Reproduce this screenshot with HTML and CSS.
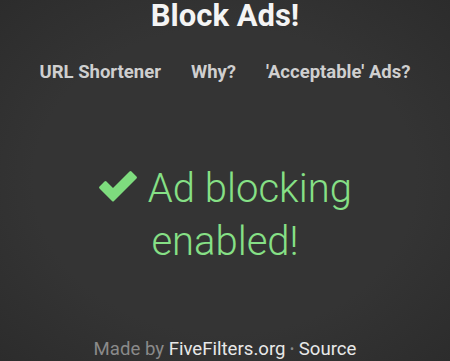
FILE: index.html
```html
<!DOCTYPE html>
<html>
<head>
<meta charset="utf-8">
<link rel="stylesheet" href="styles.css">
</head>
<body>
<div class="page">
  <h1 class="title">Block Ads!</h1>
  <nav class="nav">
    <a class="nav-link">URL Shortener</a>
    <a class="nav-link">Why?</a>
    <a class="nav-link">'Acceptable' Ads?</a>
  </nav>
  <main class="status">
    <p class="status-text"><svg class="check" viewBox="0 0 40 33" width="40" height="33"><path d="M1.5 19.5 Q0.5 18.5 1.5 17.5 L6.5 12.5 Q7.5 11.5 8.5 12.5 L15 19 L31.5 2.5 Q32.5 1.5 33.5 2.5 L38.5 7.5 Q39.5 8.5 38.5 9.5 L16 32 Q15 33 14 32 Z" fill="#7edc7e"/></svg> Ad blocking enabled!</p>
  </main>
  <footer class="footer">
    <span class="muted">Made by</span> <a class="foot-link">FiveFilters.org</a> <span class="dot">•</span> <a class="foot-link">Source</a>
  </footer>
</div>
</body>
</html>
```
FILE: styles.css
```css
html, body {
  margin: 0;
  padding: 0;
  height: 100%;
}
body {
  background: #333333;
  font-family: Roboto, "Liberation Sans", sans-serif;
  overflow: hidden;
}
.page {
  height: 361px;
  display: flex;
  flex-direction: column;
  align-items: center;
  background: radial-gradient(ellipse at center, #343434 60%, #2c2c2c 100%);
}
.title {
  margin: 0;
  font-size: 31px;
  font-weight: 700;
  color: #f4f4f4;
  line-height: 32px;
}
.nav {
  display: flex;
  gap: 30px;
  margin-top: 29px;
}
.nav-link {
  font-size: 18.5px;
  font-weight: 700;
  color: #cfcfcf;
  line-height: 22px;
}
.status {
  margin-top: 79px;
  width: 300px;
  text-align: center;
}
.status-text {
  margin: 0;
  font-size: 40px;
  font-weight: 300;
  color: #86e086;
  line-height: 53px;
}
.check {
  vertical-align: 0px;
}
.footer {
  margin-top: auto;
  padding-bottom: 1px;
  font-size: 18.6px;
  line-height: 22px;
  color: #e8e8e8;
}
.muted {
  color: #8a8a8a;
}
.dot {
  color: #8a8a8a;
  font-size: 12px;
  vertical-align: 2px;
}
```
